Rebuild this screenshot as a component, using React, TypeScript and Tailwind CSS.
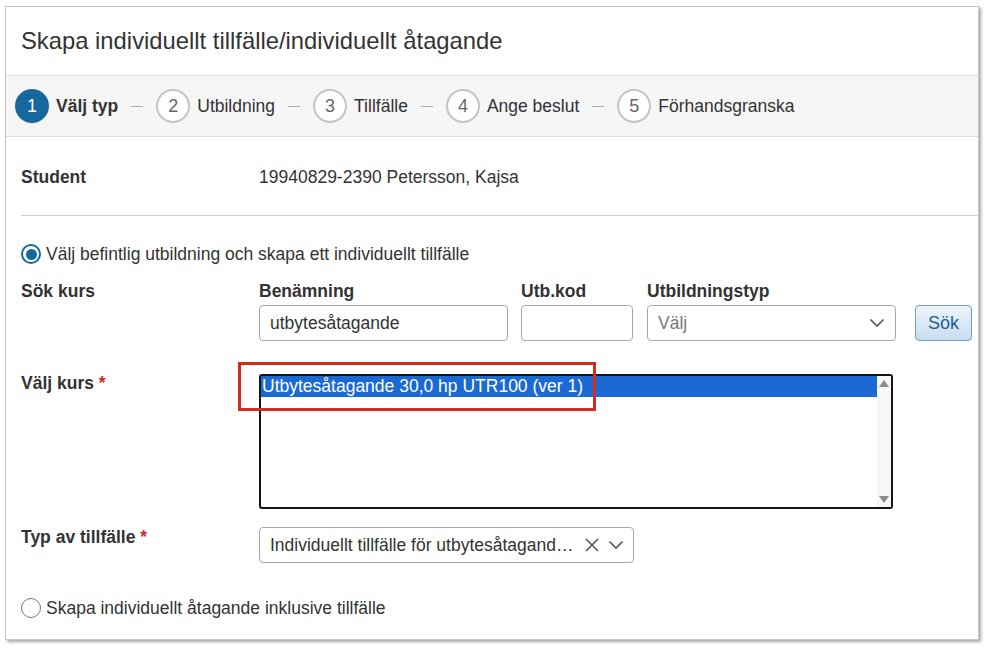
import React from "react";

const font = { fontFamily: '"Liberation Sans", Arial, sans-serif' };

function Step({ n, label, active }: { n: number; label: string; active?: boolean }) {
  return (
    <div className="flex items-center">
      <div
        className={
          active
            ? "w-[34px] h-[34px] rounded-full bg-[#17679f] text-white flex items-center justify-center text-[18px]"
            : "w-[34px] h-[34px] rounded-full border-2 border-[#c4c4c4] bg-white text-[#666] flex items-center justify-center text-[18px]"
        }
      >
        {n}
      </div>
      <span className={active ? "ml-[7px] text-[17.5px] font-bold text-[#333]" : "ml-[7px] text-[17.5px] text-[#333]"}>
        {label}
      </span>
    </div>
  );
}

function Dash() {
  return <div className="mx-[13px] w-[12px] h-[1px] bg-[#aaa]" />;
}

function Chevron({ className }: { className?: string }) {
  return (
    <svg className={className} width="16" height="10" viewBox="0 0 16 10" fill="none">
      <path d="M1.5 1.5 L8 8 L14.5 1.5" stroke="#555" strokeWidth="1.6" />
    </svg>
  );
}

export default function App() {
  return (
    <div className="w-[992px] h-[651px] bg-white pt-[6px] pl-[5px]" style={font}>
      <div className="w-[974px] border border-[#c6c6c6] bg-white shadow-[2px_2px_3px_rgba(0,0,0,0.35)]">
        <div className="h-[69px] pl-[15px] flex items-center text-[23.8px] text-[#333] border-b border-[#e2e2e2]">
          Skapa individuellt tillfälle/individuellt åtagande
        </div>
        <div className="h-[61px] pl-[9px] flex items-center bg-[#f6f6f6] border-b border-[#dcdcdc]">
          <Step n={1} label="Välj typ" active />
          <Dash />
          <Step n={2} label="Utbildning" />
          <Dash />
          <Step n={3} label="Tillfälle" />
          <Dash />
          <Step n={4} label="Ange beslut" />
          <Dash />
          <Step n={5} label="Förhandsgranska" />
        </div>

        <div className="pl-[15px] pb-[19px] text-[17.5px] text-[#333]">
          <div className="flex pt-[28px] leading-[24px]">
            <div className="w-[238px] font-bold">Student</div>
            <div>19940829-2390 Petersson, Kajsa</div>
          </div>
          <div className="mt-[26px] h-px bg-[#cfcfcf]" />

          <div className="mt-[26px] flex items-center leading-[24px]">
            <div className="w-[20px] h-[20px] rounded-full border-[2.5px] border-[#17679f] flex items-center justify-center">
              <div className="w-[11px] h-[11px] rounded-full bg-[#17679f]" />
            </div>
            <span className="ml-[5px]">Välj befintlig utbildning och skapa ett individuellt tillfälle</span>
          </div>

          <div className="mt-[13px] flex">
            <div className="w-[238px] font-bold leading-[24px]">Sök kurs</div>
            <div className="flex items-end">
              <div className="w-[249px]">
                <div className="font-bold leading-[24px] mb-[2px]">Benämning</div>
                <div className="h-[36px] border border-[#a8a8a8] rounded-[4px] flex items-center px-[10px]">
                  utbytesåtagande
                </div>
              </div>
              <div className="w-[112px] ml-[13px]">
                <div className="font-bold leading-[24px] mb-[2px]">Utb.kod</div>
                <div className="h-[36px] border border-[#a8a8a8] rounded-[4px]" />
              </div>
              <div className="w-[249px] ml-[14px]">
                <div className="font-bold leading-[24px] mb-[2px]">Utbildningstyp</div>
                <div className="h-[36px] border border-[#a8a8a8] rounded-[4px] flex items-center justify-between pl-[10px] pr-[10px]">
                  <span className="text-[#777]">Välj</span>
                  <Chevron />
                </div>
              </div>
              <button className="ml-[19px] w-[57px] h-[36px] rounded-[4px] border border-[#6f9ecb] bg-gradient-to-b from-[#eef5fb] to-[#c7ddef] text-[#1e5e96] text-[18px]">
                Sök
              </button>
            </div>
          </div>

          <div className="mt-[30px] flex">
            <div className="w-[238px] font-bold leading-[24px]">
              Välj kurs <span className="text-[#cc2b2b]">*</span>
            </div>
            <div className="relative mt-[3px] w-[634px] h-[135px] border-2 border-[#151515] rounded-[3px] flex">
              <div className="flex-1">
                <div className="h-[21px] bg-[#1b69d2] text-white leading-[21px] pl-[1px] whitespace-nowrap">
                  Utbytesåtagande 30,0 hp UTR100 (ver 1)
                </div>
              </div>
              <div className="w-[14px] bg-[#f7f7f7] flex flex-col justify-between items-center py-[4px]">
                <svg width="10" height="7" viewBox="0 0 10 7">
                  <path d="M0 7 L5 0 L10 7 Z" fill="#8a8a8a" />
                </svg>
                <svg width="10" height="7" viewBox="0 0 10 7">
                  <path d="M0 0 L5 7 L10 0 Z" fill="#8a8a8a" />
                </svg>
              </div>
              <div className="absolute left-[-23px] top-[-14px] w-[358px] h-[49px] border-[3px] border-[#d42b1c]" />
            </div>
          </div>

          <div className="mt-[16px] flex">
            <div className="w-[238px] font-bold leading-[24px]">
              Typ av tillfälle <span className="text-[#cc2b2b]">*</span>
            </div>
            <div className="mt-[2px] w-[375px] h-[36px] border border-[#a8a8a8] rounded-[4px] flex items-center pl-[10px] pr-[9px]">
              <span className="flex-1 whitespace-nowrap">Individuellt tillfälle för utbytesåtagand…</span>
              <svg width="16" height="16" viewBox="0 0 16 16" className="mr-[8px]">
                <path d="M2 2 L14 14 M14 2 L2 14" stroke="#555" strokeWidth="1.6" />
              </svg>
              <Chevron />
            </div>
          </div>

          <div className="mt-[33px] flex items-center leading-[24px]">
            <div className="w-[20px] h-[20px] rounded-full border-[1.5px] border-[#777]" />
            <span className="ml-[5px]">Skapa individuellt åtagande inklusive tillfälle</span>
          </div>
        </div>
      </div>
    </div>
  );
}
